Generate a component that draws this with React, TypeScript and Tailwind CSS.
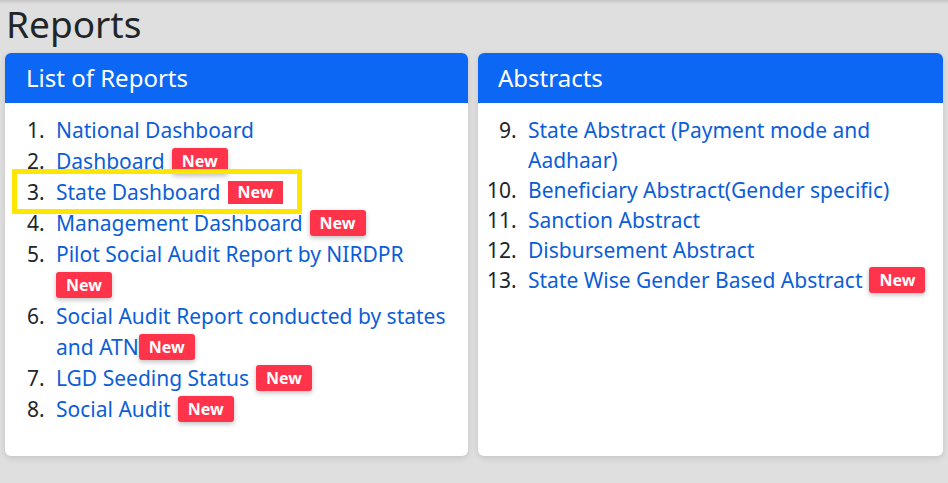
import React from "react";

function Badge({ flat = false, tight = false }: { flat?: boolean; tight?: boolean }) {
  return (
    <span
      className={
        "inline-block bg-[#ff3349] text-white font-bold text-[16px] px-[10px] align-[2px] " +
        (flat
          ? "rounded-none leading-[23px] "
          : "rounded-[3px] leading-[26px] shadow-[0_2px_5px_rgba(0,0,0,0.25)] ") +
        (tight ? "ml-0" : "ml-[7px]")
      }
    >
      New
    </span>
  );
}

function Item({ children }: { children: React.ReactNode }) {
  return <li className="pl-[6px] text-[#212529]">{children}</li>;
}

function L({ children }: { children: React.ReactNode }) {
  return <a className="text-[#0b5ed7] no-underline">{children}</a>;
}

export default function App() {
  return (
    <div
      className="w-[948px] h-[483px] bg-[#dfdfdf] relative overflow-hidden"
      style={{ fontFamily: '"Noto Sans", "Open Sans", sans-serif' }}
    >
      <div className="absolute top-0 left-0 right-0 h-[4px] bg-gradient-to-b from-[#c4c4c4] to-[#dfdfdf]" />
      <h1 className="text-[37px] leading-[46px] text-[#212529] px-[6px] pt-[1px] h-[53px]">Reports</h1>
      <div className="flex gap-[10px] px-[5px]">
        <div className="relative w-[463px] h-[403px] bg-white rounded-[6px] overflow-hidden shadow-[0_2px_6px_rgba(0,0,0,0.12)]">
          <div className="h-[50px] bg-[#0d67f5] text-white text-[24px] leading-[50px] px-[21px]">List of Reports</div>
          <ol className="list-decimal pl-[45px] pr-[10px] pt-[12px] text-[21px] leading-[31px]">
            <Item><L>National Dashboard</L></Item>
            <Item><L>Dashboard</L><Badge /></Item>
            <Item><L>State Dashboard</L><Badge flat /></Item>
            <Item><L>Management Dashboard</L><Badge /></Item>
            <Item><L>Pilot Social Audit Report by NIRDPR</L> <Badge tight /></Item>
            <Item><L>Social Audit Report conducted by states and ATN</L><Badge tight /></Item>
            <Item><L>LGD Seeding Status</L><Badge /></Item>
            <Item><L>Social Audit</L><Badge /></Item>
          </ol>
          <div className="absolute left-[7px] top-[116px] w-[290px] h-[45px] border-[5px] border-[#ffe600]" />
        </div>
        <div className="w-[465px] h-[403px] bg-white rounded-[6px] overflow-hidden shadow-[0_2px_6px_rgba(0,0,0,0.12)]">
          <div className="h-[50px] bg-[#0d67f5] text-white text-[24px] leading-[50px] px-[20px]">Abstracts</div>
          <ol start={9} className="list-decimal pl-[44px] pr-[14px] pt-[12px] text-[21px] leading-[30px]">
            <Item><L>State Abstract (Payment mode and Aadhaar)</L></Item>
            <Item><L>Beneficiary Abstract(Gender specific)</L></Item>
            <Item><L>Sanction Abstract</L></Item>
            <Item><L>Disbursement Abstract</L></Item>
            <Item><L>State Wise Gender Based Abstract</L><Badge /></Item>
          </ol>
        </div>
      </div>
    </div>
  );
}
